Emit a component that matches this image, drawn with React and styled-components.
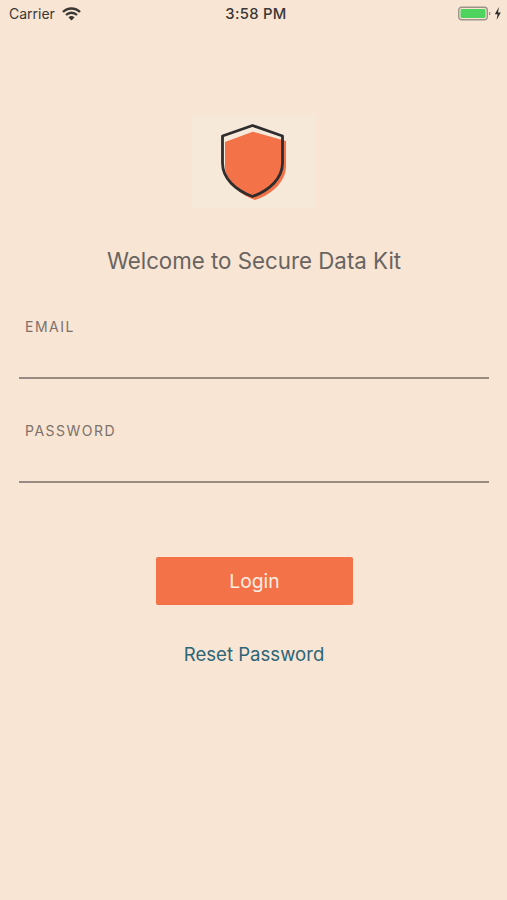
import { createGlobalStyle } from "styled-components"
import styled from "styled-components"

const GlobalStyle = createGlobalStyle`
  html, body {
    margin: 0;
    padding: 0;
    background: #f8e5d4;
  }
  * {
    box-sizing: border-box;
  }
`

const Screen = styled.div`
  width: 507px;
  height: 900px;
  background: #f8e5d4;
  font-family: Inter, "Liberation Sans", sans-serif;
  display: flex;
  flex-direction: column;
  overflow: hidden;
`

const StatusBar = styled.div`
  height: 27px;
  padding: 0 9px;
  display: grid;
  grid-template-columns: 1fr auto 1fr;
  align-items: center;
  color: #3a3734;
  font-size: 14px;
`

const Carrier = styled.div`
  display: flex;
  align-items: center;
  gap: 7px;
`

const Clock = styled.div`
  margin-left: 5px;
  font-size: 14.8px;
  font-weight: 500;
  letter-spacing: 0.3px;
`

const Battery = styled.div`
  justify-self: end;
  display: flex;
  align-items: center;
  margin-right: -6px;
`

const LogoBox = styled.div`
  width: 124px;
  height: 93px;
  margin: 88px auto 0;
  background: #f7e9da;
`

const Title = styled.h1`
  margin: 39px 0 0;
  padding-left: 1px;
  height: 28px;
  font-size: 22.3px;
  line-height: 28px;
  font-weight: 400;
  color: #686461;
  text-align: center;
`

const Form = styled.div`
  margin-top: 29px;
  padding: 0 18px 0 19px;
  display: flex;
  flex-direction: column;
  gap: 29px;
`

const Field = styled.div`
  height: 75px;
  padding: 14px 7px 0 6px;
  border-bottom: 2px solid #968c84;
`

const Label = styled.label`
  display: block;
  font-size: 14px;
  line-height: 18px;
  letter-spacing: 1.5px;
  color: #7b716a;
`

const LoginButton = styled.button`
  display: block;
  width: 197px;
  height: 48px;
  margin: 74px 0 0 156px;
  border: none;
  border-radius: 2px;
  background: #f37248;
  color: #fbeee3;
  font-family: inherit;
  font-size: 19.3px;
`

const ResetLink = styled.a`
  margin-top: 36px;
  padding-left: 1px;
  text-align: center;
  font-size: 18.6px;
  line-height: 26px;
  color: #2d6577;
`

const WifiIcon = () => (
  <svg width="19" height="14" viewBox="0 0 19 14">
    <path d="M1 5 A12 12 0 0 1 18 5" fill="none" stroke="#3a3734" strokeWidth="2.4" />
    <path d="M4 8 A8 8 0 0 1 15 8" fill="none" stroke="#3a3734" strokeWidth="2.4" />
    <path d="M6.5 10.4 A4 4 0 0 1 12.5 10.4 L9.5 13.5 Z" fill="#3a3734" />
  </svg>
)

const BatteryIcon = () => (
  <svg width="46" height="16" viewBox="0 0 46 16">
    <rect x="0.7" y="1.2" width="28.6" height="12.6" rx="3" fill="none" stroke="#9c948a" strokeWidth="1.4" />
    <rect x="2.5" y="3" width="25" height="9" rx="1.4" fill="#4cd45f" />
    <rect x="31" y="6" width="1.3" height="3" fill="#9c948a" />
    <path d="M41 1 L36.8 8.3 H39.6 L38.6 14 L42.8 6.5 H40 Z" fill="#2f2d2b" />
  </svg>
)

const ShieldLogo = () => (
  <svg width="124" height="93" viewBox="192 115 124 93">
    <path
      d="M252.7 131.7 L286 141 V166 C286 181 273 194 255 200 C238 194 225 181 225 166 V142 Z"
      fill="#f37248"
    />
    <path
      d="M252.5 125.5 L282.5 136 V163 C282.5 178 270 190 252.5 196.5 C235 190 222.5 178 222.5 163 V136 Z"
      fill="none"
      stroke="#2f2d2e"
      strokeWidth="2.8"
      strokeLinejoin="round"
    />
  </svg>
)

const App = () => {
  return (
    <Screen>
      <GlobalStyle />
      <StatusBar>
        <Carrier>
          Carrier
          <WifiIcon />
        </Carrier>
        <Clock>3:58 PM</Clock>
        <Battery>
          <BatteryIcon />
        </Battery>
      </StatusBar>
      <LogoBox>
        <ShieldLogo />
      </LogoBox>
      <Title>Welcome to Secure Data Kit</Title>
      <Form>
        <Field>
          <Label>EMAIL</Label>
        </Field>
        <Field>
          <Label>PASSWORD</Label>
        </Field>
      </Form>
      <LoginButton>Login</LoginButton>
      <ResetLink>Reset Password</ResetLink>
    </Screen>
  )
}

export default App
